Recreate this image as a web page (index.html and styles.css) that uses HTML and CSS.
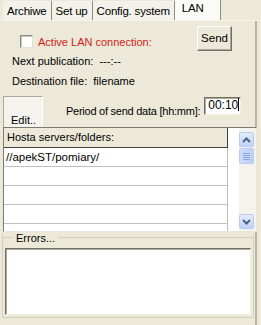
FILE: index.html
```html
<!DOCTYPE html>
<html>
<head>
<meta charset="utf-8">
<link rel="stylesheet" href="styles.css">
</head>
<body>
<div class="win">
  <div class="tabs">
    <div class="tab first">Archiwe</div>
    <div class="tab">Set up</div>
    <div class="tab">Config. system</div>
    <div class="tab active">LAN</div>
  </div>
  <div class="panel">
    <div class="row1">
      <div class="chk"><span class="box"></span><span class="red">Active LAN connection:</span></div>
      <div class="btn send">Send</div>
    </div>
    <div class="info next">Next publication:&nbsp; ---:--</div>
    <div class="info dest">Destination file:&nbsp; filename</div>
    <div class="row3">
      <div class="edit">Edit..</div>
      <div class="period">Period of send data [hh:mm]:</div>
      <div class="input">00:10<span class="caret"></span></div>
    </div>
    <div class="grid">
      <div class="cells">
        <div class="hdr">Hosta servers/folders:</div>
        <div class="cell">//apekST/pomiary/</div>
        <div class="cell"></div>
        <div class="cell"></div>
        <div class="cell"></div>
        <div class="cell last"></div>
      </div>
      <div class="gap"></div>
      <div class="scroll">
        <div class="sbtn up"><svg width="9" height="6" viewBox="0 0 9 6"><path d="M1 5 L4.5 1.5 L8 5" fill="none" stroke="#4d6185" stroke-width="2"/></svg></div>
        <div class="thumb"><span></span><span></span><span></span><span></span></div>
        <div class="track"></div>
        <div class="sbtn down"><svg width="9" height="6" viewBox="0 0 9 6"><path d="M1 1 L4.5 4.5 L8 1" fill="none" stroke="#4d6185" stroke-width="2"/></svg></div>
      </div>
    </div>
    <div class="errors">
      <div class="legend">Errors...</div>
      <div class="memo"></div>
    </div>
  </div>
</div>
</body>
</html>
```
FILE: styles.css
```css
* { box-sizing: border-box; }
html, body { margin: 0; padding: 0; }
body { background: #ece9d8; font-family: "Liberation Sans", Arial, sans-serif; font-size: 11px; color: #000; }
.win { width: 261px; height: 325px; background: #ece9d8; display: flex; flex-direction: column; overflow: hidden; }
.tabs { display: flex; height: 21px; padding-left: 3px; align-items: flex-end; border-bottom: 1px solid #f4f3ee; }
.tab { height: 19px; padding: 0 4px; line-height: 21px; background: #f3f2ea; border-right: 1px solid #8f8d82; font-size: 11.5px; letter-spacing: -0.2px; }
.tab.first { padding-left: 4px; }
.tab.active { height: 21px; line-height: 19px; background: #fbfbf8; border-right: 1px solid #91907f; width: 46px; padding-left: 7px; }
.panel { flex: 1; display: flex; flex-direction: column; border-right: 2px solid #b9b6a3; margin-right: 4px; position: relative; }
.row1 { display: flex; align-items: flex-start; margin-top: 5px; height: 25px; }
.chk { display: flex; align-items: center; margin-left: 20px; margin-top: 9px; }
.box { width: 13px; height: 13px; background: #fff; border: 1px solid #1c5180; border-color: #8b8b7f #e5e3d8 #e5e3d8 #8b8b7f; box-shadow: inset 1px 1px 0 #c9c7ba; margin-right: 5px; }
.red { color: #d21b15; }
.btn { height: 25px; width: 35px; border: 1px solid #fff; border-right-color: #716f64; border-bottom-color: #716f64; box-shadow: inset -1px -1px 0 #aca899; background: #ece9d8; text-align: center; line-height: 22px; font-size: 11.5px; }
.send { margin-left: auto; margin-right: 23px; }
.info { height: 14px; line-height: 14px; margin-left: 12px; }
.next { margin-top: 3px; }
.dest { margin-top: 6px; }
.row3 { display: flex; margin-top: 8px; height: 31px; position: relative; }
.edit { width: 40px; height: 31px; margin-left: 3px; border: 1px solid #aca899; border-bottom: none; border-right-color: #fff; background: #f4f3ee; padding-top: 17px; padding-left: 7px; }
.period { margin-left: 23px; margin-top: 9px; line-height: 13px; letter-spacing: -0.25px; white-space: nowrap; }
.input { width: 37px; height: 18px; margin-left: 4px; margin-top: 1px; background: #fff; border: 1px solid #7f9db9; border-color: #716f64 #f1efe2 #f1efe2 #716f64; box-shadow: inset 1px 1px 0 #aca899; padding-left: 3px; line-height: 15px; font-size: 12px; position: relative; }
.caret { display: inline-block; width: 1px; height: 13px; background: #000; vertical-align: -2px; }
.grid { display: flex; height: 105px; margin-left: 3px; margin-right: -2px; background: #fff; border: 1px solid #7a7a70; border-right-color: #e9e7dc; border-bottom-color: #e9e7dc; }
.cells { width: 224px; display: flex; flex-direction: column; }
.hdr { height: 20px; background: #ece9d8; border-bottom: 1px solid #404040; border-right: 1px solid #404040; padding-left: 3px; line-height: 18px; }
.cell { height: 19px; border-bottom: 1px solid #c0c0c0; border-right: 1px solid #c0c0c0; padding-left: 2px; line-height: 18px; font-size: 11.5px; }
.cell.last { height: 7px; border-bottom: none; }
.gap { flex: 1; }
.scroll { width: 17px; display: flex; flex-direction: column; background: #f4f3ee; padding: 1px 2px 0 0; }
.sbtn { height: 15px; border: 1px solid #b9ccef; border-radius: 2px; background: linear-gradient(#e4ecfd, #c0d3f9); display: flex; align-items: center; justify-content: center; }
.up { margin-top: 3px; }
.thumb { height: 16px; margin-top: 1px; border: 1px solid #b9ccef; border-radius: 2px; background: linear-gradient(90deg, #cddcfb, #bcd0f8); display: flex; flex-direction: column; align-items: center; justify-content: center; gap: 1px; }
.thumb span { width: 7px; height: 1px; background: #8ea9e0; }
.track { flex: 1; }
.down { margin-bottom: 2px; }
.errors { margin: 2px 1px 0 2px; height: 84px; border: 1px solid #d0d0bf; border-top: none; position: relative; display: flex; flex-direction: column; }
.errors::before { content: ""; position: absolute; top: 3px; left: 0; right: 0; height: 1px; background: #d0d0bf; }
.legend { position: relative; margin-left: 10px; padding: 0 3px; background: #ece9d8; align-self: flex-start; line-height: 8px; height: 9px; font-size: 11px; }
.memo { margin: 5px 2px 2px 2px; flex: 1; background: #fff; border: 1px solid #716f64; border-color: #716f64 #f1efe2 #f1efe2 #716f64; box-shadow: inset 1px 1px 0 #aca899; }
```
